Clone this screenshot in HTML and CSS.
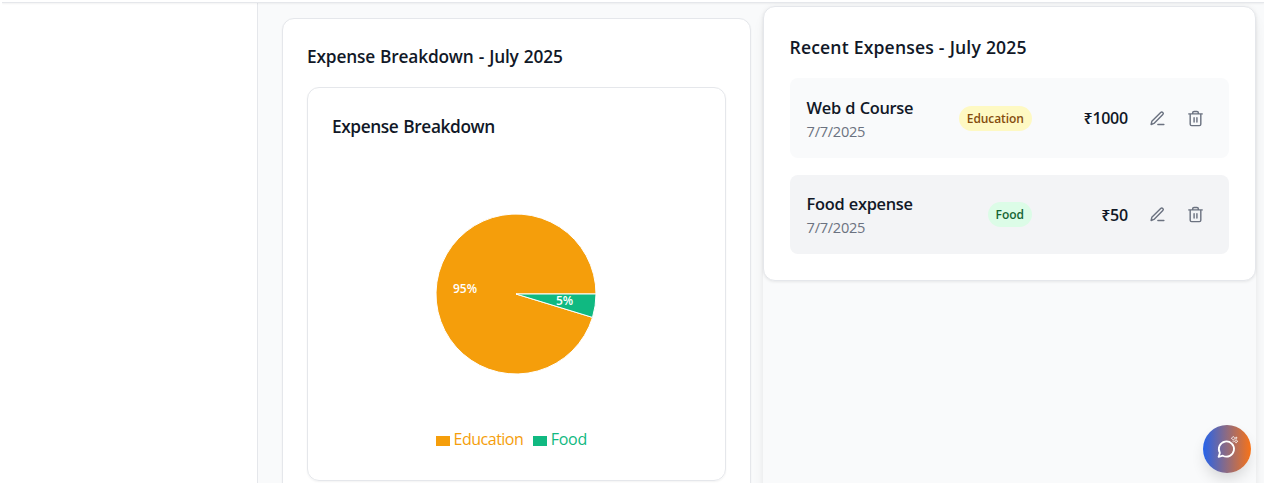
FILE: index.html
```html
<!DOCTYPE html>
<html lang="en">
<head>
<meta charset="utf-8">
<title>Expenses</title>
<link rel="stylesheet" href="styles.css">
</head>
<body>
<svg class="defs" width="0" height="0">
  <symbol id="pen" viewBox="0 0 24 24"><path d="M12.5 20.5H21M16.5 3.5a2.12 2.12 0 0 1 3 3L7 19l-4 1.500 1-4.500Z"/></symbol>
  <symbol id="trash" viewBox="0 0 24 24"><path d="M2.500 5.500h19M19.500 5.500v14.500a2 2 0 0 1-2 2h-11a2 2 0 0 1-2-2V5.500M8 5.500V4a2 2 0 0 1 2-2h4a2 2 0 0 1 2 2v1.500M10 11v6M14 11v6"/></symbol>
</svg>
<div class="app">
  <header class="topbar"></header>
  <div class="shell">
    <aside class="sidebar"></aside>
    <main class="content">
      <section class="breakdown">
        <h2 class="title title-main">Expense Breakdown - July 2025</h2>
        <div class="chart-card">
          <h3 class="title title-chart">Expense Breakdown</h3>
          <svg class="pie" width="160" height="160" viewBox="0 0 160 160">
            <path class="slice education" d="M80 80L160 80A80 80 0 1 0 156.5 103.4Z"/>
            <path class="slice food" d="M80 80L156.5 103.4A80 80 0 0 0 160 80Z"/>
            <text class="pct" x="17" y="79" textLength="24">95%</text>
            <text class="pct" x="120" y="91" textLength="17">5%</text>
          </svg>
          <div class="legend">
            <span class="key key-education"><i class="swatch"></i><span class="key-text">Education</span></span>
            <span class="key key-food"><i class="swatch"></i><span class="key-text">Food</span></span>
          </div>
        </div>
      </section>
      <div class="recent-column">
        <section class="recent">
          <h2 class="title title-recent">Recent Expenses - July 2025</h2>
          <article class="expense">
            <div class="info"><div class="name">Web d Course</div><div class="date">7/7/2025</div></div>
            <span class="badge badge-education">Education</span>
            <span class="amount">₹1000</span>
            <svg class="icon"><use href="#pen"/></svg>
            <svg class="icon"><use href="#trash"/></svg>
          </article>
          <article class="expense hovered">
            <div class="info"><div class="name">Food expense</div><div class="date">7/7/2025</div></div>
            <span class="badge badge-food">Food</span>
            <span class="amount">₹50</span>
            <svg class="icon"><use href="#pen"/></svg>
            <svg class="icon"><use href="#trash"/></svg>
          </article>
        </section>
      </div>
    </main>
  </div>
  <button class="chat" aria-label="Chat">
    <svg class="chat-icon" width="24" height="24" viewBox="0 0 24 24"><path class="bubble" d="M3.600 20.800l1.300-3.900a7.600 7.600 0 1 1 2.900 2.800Z"/><path class="spark" d="M18.300 .3l.8 1.300 1.300.7-1.300.7-.8 1.300-.8-1.300-1.300-.7 1.300-.7ZM21.300 .7v2.200M20.200 1.800h2.200M21.100 3.500l.6 1.200 1.200.6-1.200.6-.6 1.200-.6-1.200-1.200-.6 1.200-.6ZM18.100 4.800v1.600"/></svg>
  </button>
</div>
</body>
</html>
```
FILE: styles.css
```css
* { box-sizing: border-box; }
body { margin: 0; background: #fff; font-family: "Open Sans", "Noto Sans", sans-serif; color: #111827; }
.defs { position: absolute; }
.app { position: relative; display: flex; flex-direction: column; width: 1262px; height: 483px; margin-left: 2px; overflow: hidden; }
.topbar { flex: none; height: 3px; border-bottom: 1px solid #e5e7eb; background: #fff; box-shadow: 0 1px 2px rgba(0,0,0,.05); z-index: 1; }
.shell { flex: 1; display: flex; min-height: 0; }
.sidebar { width: 256px; border-right: 1px solid #e5e7eb; background: #fff; }
.content { flex: 1; display: flex; align-items: flex-start; gap: 12px; padding: 15px 8px 0 24px; background: #f9fafb; }
.breakdown { width: 469px; height: 520px; padding: 24px; border: 1px solid #e5e7eb; border-radius: 12px; background: #fff; box-shadow: 0 1px 2px rgba(0,0,0,.05); }
.title { margin: 0; font-size: 17.3px; line-height: 28px; font-weight: 600; white-space: nowrap; }
.title-main { margin-bottom: 16px; letter-spacing: -.18px; word-spacing: .8px; }
.title-chart { line-height: 27px; margin-bottom: 1px; letter-spacing: -.4px; word-spacing: .8px; }
.title-recent { margin-bottom: 17.3px; font-size: 17.6px; letter-spacing: .13px; word-spacing: .3px; }
.chart-card { display: flex; flex-direction: column; height: 394px; padding: 25px 24px 0; border: 1px solid #e5e7eb; border-radius: 12px; box-shadow: 0 1px 2px rgba(0,0,0,.05); }
.pie { align-self: center; margin: 73px 1px 0 0; overflow: visible; }
.slice { stroke: #fff; stroke-width: 1; }
.education { fill: #f59e0b; }
.food { fill: #10b981; }
.pct { fill: #fff; font-size: 12px; font-weight: 600; }
.legend { display: flex; justify-content: center; gap: 10px; margin-top: 53px; padding-right: 10px; font-size: 16px; line-height: 24px; }
.key { display: flex; align-items: center; gap: 3.500px; }
.key-text { letter-spacing: -.5px; }
.key-food .key-text { letter-spacing: -.3px; }
.key-education { color: #f59e0b; }
.key-food { color: #10b981; }
.swatch { width: 14px; height: 10px; margin-top: 3px; background: currentColor; }
.recent-column { width: 493px; height: 620px; margin-top: -12px; border-radius: 12px; box-shadow: 0 10px 15px -3px rgba(0,0,0,.08), 0 0 6px rgba(0,0,0,.04); }
.recent { height: 275px; padding: 26px 26px 0 25.6px; border: 1px solid #e5e7eb; border-radius: 12px; background: #fff; box-shadow: 0 1px 3px rgba(0,0,0,.08); }
.expense { display: flex; align-items: center; height: 79.5px; padding: 0 25.200px 0 17px; border-radius: 8px; background: #f9fafb; }
.expense + .expense { margin-top: 17.2px; }
.expense.hovered { background: #f3f4f6; }
.info { flex: 1; padding-top: 1px; }
.name { font-size: 16.4px; line-height: 24px; font-weight: 600; letter-spacing: -.3px; word-spacing: .5px; }
.date { font-size: 14.6px; line-height: 22px; color: #6b7280; letter-spacing: -.28px; }
.badge { height: 25px; padding: 0 8px; border-radius: 13px; font-size: 12px; line-height: 25px; font-weight: 600; letter-spacing: -.08px; }
.badge-education { background: #fef9c3; color: #854d0e; }
.badge-food { background: #dcfce7; color: #166534; }
.amount { width: 96px; text-align: right; font-size: 16px; font-weight: 600; letter-spacing: -.3px; }
.icon { width: 17px; height: 17px; margin-left: 21px; fill: none; stroke: #6b7280; stroke-width: 2; stroke-linecap: round; stroke-linejoin: round; }
.chat { position: absolute; left: 1201px; top: 425px; display: flex; align-items: center; justify-content: center; width: 48px; height: 48px; padding: 0; border: 0; border-radius: 50%; background: linear-gradient(90deg, #2563eb, #f97316); box-shadow: 0 8px 15px -3px rgba(0,0,0,.16); }
.chat-icon { margin-top: -2px; }
.bubble { fill: none; stroke: #fff; stroke-width: 1.8; stroke-linejoin: round; }
.spark { fill: none; stroke: #fff; stroke-width: .8; stroke-opacity: .85; }
```
